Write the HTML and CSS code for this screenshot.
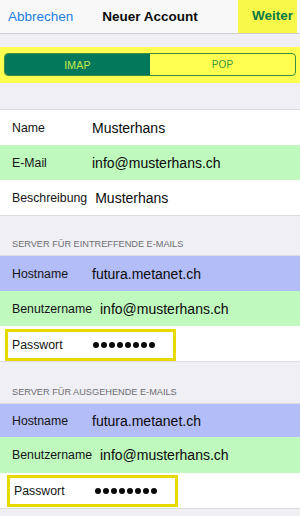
FILE: index.html
```html
<!DOCTYPE html>
<html lang="de">
<head>
<meta charset="utf-8">
<title>Neuer Account</title>
<link rel="stylesheet" href="styles.css">
</head>
<body>
<div class="screen">
  <header class="nav">
    <span class="nav-left">Abbrechen</span>
    <span class="nav-title">Neuer Account</span>
    <span class="nav-right">Weiter</span>
  </header>

  <div class="seg-band">
    <div class="seg">
      <div class="seg-item seg-active">IMAP</div>
      <div class="seg-item">POP</div>
    </div>
  </div>

  <div class="group group-first">
    <div class="row"><span class="label">Name</span><span class="value">Musterhans</span></div>
    <div class="row green"><span class="label">E-Mail</span><span class="value">info@musterhans.ch</span></div>
    <div class="row"><span class="label">Beschreibung</span><span class="value">Musterhans</span></div>
  </div>

  <div class="section-head">SERVER FÜR EINTREFFENDE E-MAILS</div>
  <div class="group">
    <div class="row blue"><span class="label">Hostname</span><span class="value">futura.metanet.ch</span></div>
    <div class="row green"><span class="label">Benutzername</span><span class="value">info@musterhans.ch</span></div>
    <div class="row pw-row">
      <div class="pw-box pw-box-a"><span class="label">Passwort</span><span class="dots" aria-label="Passwort verborgen"><i></i><i></i><i></i><i></i><i></i><i></i><i></i><i></i></span></div>
    </div>
  </div>

  <div class="section-head section-head-b">SERVER FÜR AUSGEHENDE E-MAILS</div>
  <div class="group">
    <div class="row blue row-short"><span class="label">Hostname</span><span class="value">futura.metanet.ch</span></div>
    <div class="row green row-tall"><span class="label">Benutzername</span><span class="value">info@musterhans.ch</span></div>
    <div class="row pw-row">
      <div class="pw-box pw-box-b"><span class="label">Passwort</span><span class="dots" aria-label="Passwort verborgen"><i></i><i></i><i></i><i></i><i></i><i></i><i></i><i></i></span></div>
    </div>
  </div>
</div>
</body>
</html>
```
FILE: styles.css
```css
* { box-sizing: border-box; }
html, body {
  margin: 0;
  padding: 0;
  background: #efeff4;
  font-family: "Liberation Sans", Arial, sans-serif;
  color: #111;
}
.screen {
  width: 300px;
  height: 516px;
  overflow: hidden;
  background: #efeff4;
}
.nav {
  display: grid;
  grid-template-columns: 1fr auto 1fr;
  align-items: center;
  height: 34px;
  background: #f8f8f8;
  border-bottom: 1px solid #cfcfd3;
}
.nav-left {
  justify-self: start;
  padding-left: 8px;
  font-size: 13.5px;
  color: #1d7fe3;
  line-height: 33px;
}
.nav-title {
  font-size: 13.5px;
  font-weight: bold;
  color: #0b0b0b;
  line-height: 33px;
}
.nav-right {
  justify-self: end;
  align-self: start;
  margin-right: 3px;
  height: 33px;
  line-height: 32px;
  padding: 0 4px 0 14px;
  width: 59px;
  background: #f8f84a;
  color: #0c7a45;
  font-size: 13.5px;
  font-weight: bold;
}
.seg-band {
  margin-top: 13px;
  height: 36px;
  padding: 6px 4px 0 4px;
  background: #ffff52;
}
.seg {
  display: flex;
  height: 23px;
  border: 1px solid #3b8d3f;
  border-radius: 4px;
  overflow: hidden;
}
.seg-item {
  flex: 1;
  display: flex;
  align-items: center;
  justify-content: center;
  font-size: 10px;
  color: #3c963c;
  letter-spacing: 0.2px;
}
.seg-active {
  background: #04785a;
  color: #c6ec4c;
  font-size: 10.5px;
}
.group {
  background: #fff;
  border-top: 1px solid #dcdce0;
  border-bottom: 1px solid #dcdce0;
}
.group-first { margin-top: 26px; }
.row {
  display: flex;
  align-items: center;
  height: 35px;
  padding-left: 12px;
  background: #fff;
}
.row-short { height: 33px; }
.row-tall { height: 36px; }
.green { background: #bff9be; }
.blue { background: #b3bdf8; }
.label {
  min-width: 72px;
  margin-right: 8px;
  font-size: 12.3px;
  color: #141414;
}
.value {
  font-size: 14px;
  color: #0a0a0a;
}
.section-head {
  height: 39px;
  display: flex;
  align-items: flex-end;
  padding: 0 0 6px 12px;
  font-size: 9.2px;
  color: #6d6d72;
}
.section-head-b { height: 41px; }
.pw-row {
  padding-left: 5px;
  align-items: flex-start;
}
.pw-box {
  display: flex;
  align-items: center;
  width: 171px;
  height: 32px;
  margin-top: 3px;
  padding-left: 4px;
  border: 3px solid #e6da00;
}
.pw-box-b { margin-left: 2px; margin-top: 2px; }
.dots {
  display: flex;
  gap: 2px;
  margin-left: 1px;
}
.dots i {
  display: block;
  width: 6px;
  height: 6px;
  border-radius: 50%;
  background: #0a0a0a;
}
```
